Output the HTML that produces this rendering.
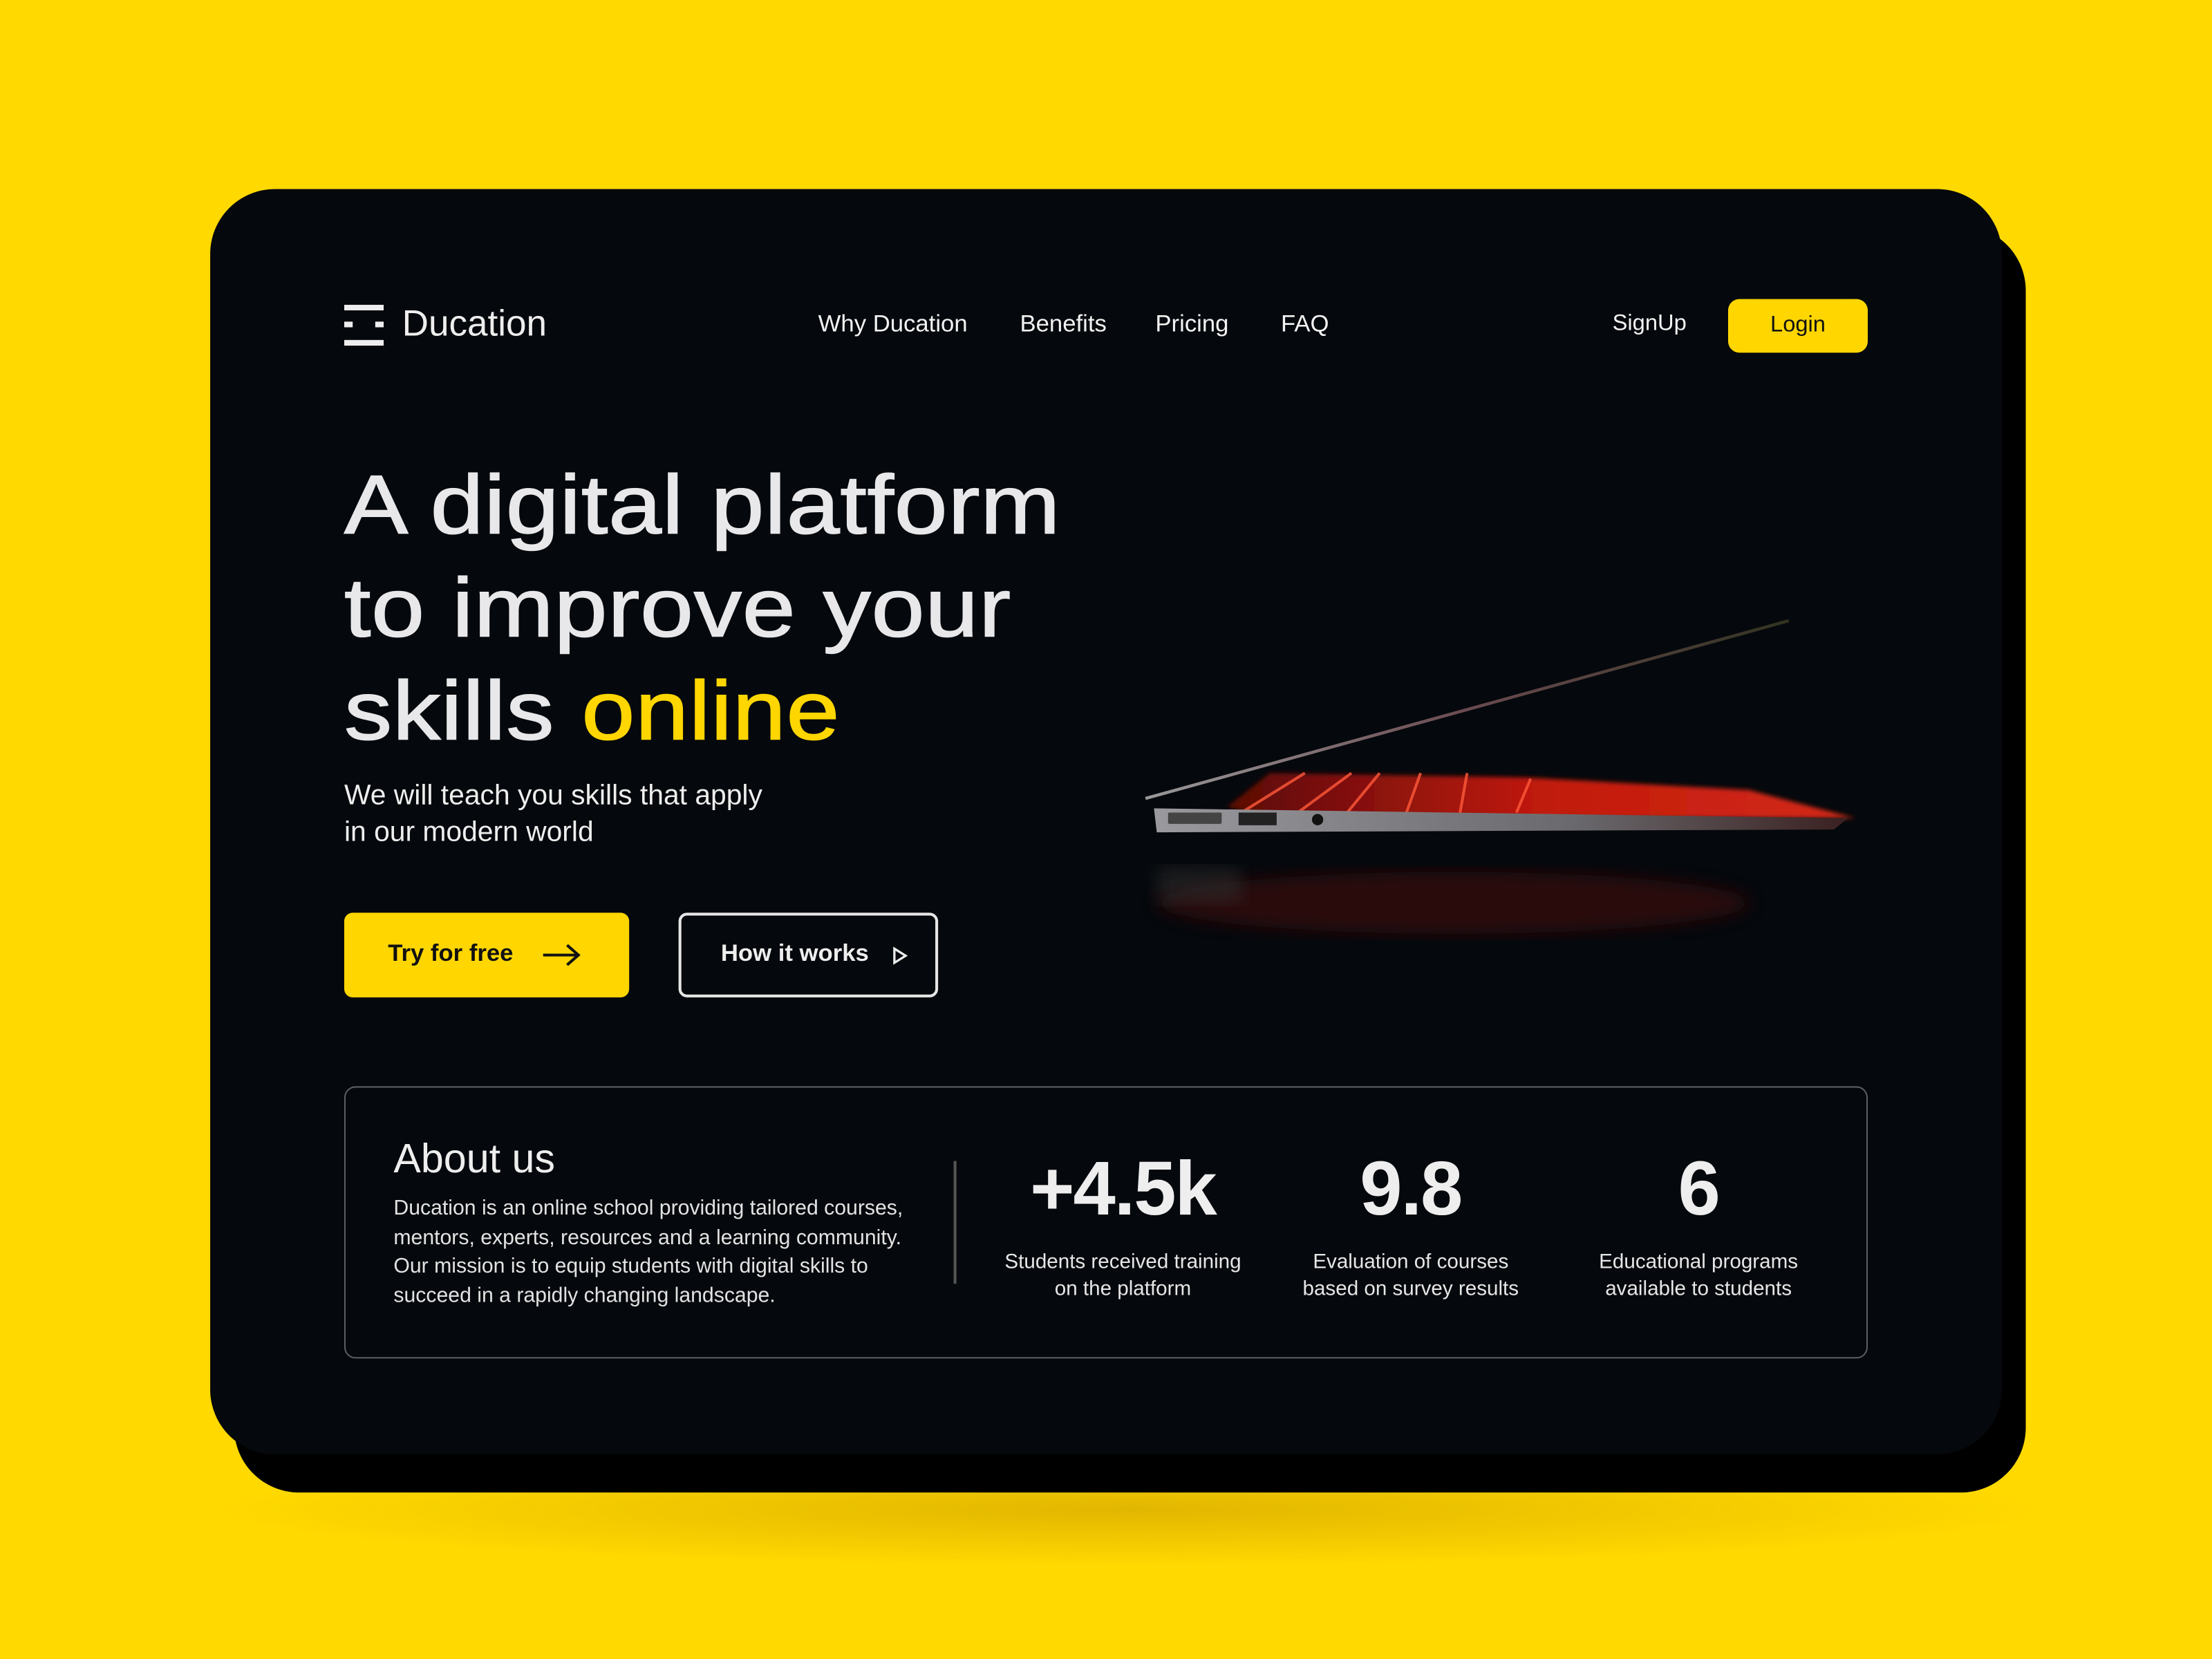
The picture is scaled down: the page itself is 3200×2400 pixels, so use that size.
<!DOCTYPE html>
<html><head><meta charset="utf-8"><style>
html,body{margin:0;padding:0}
body{width:3200px;height:2400px;background:#FFD900;overflow:hidden;position:relative;font-family:"Liberation Sans",sans-serif}
#s{position:absolute;left:0;top:0;width:1568px;height:1176px;transform:scale(2.0408);transform-origin:0 0}
.a{position:absolute;white-space:nowrap}
.nav{font-size:17px;color:#f2f2f2;top:220px}
.lab{font-size:14.5px;color:#e6e6e6;text-align:center;line-height:19px;width:220px}
.big{font-size:54px;color:#eee;text-align:center;width:220px;font-weight:bold;top:812px;letter-spacing:-1px}
</style></head><body><div id="s">
<div class="a" style="left:150px;top:1030px;width:1300px;height:80px;background:radial-gradient(ellipse at center,rgba(190,140,0,.45),rgba(255,217,0,0) 70%)"></div>
<div class="a" style="left:166px;top:160px;width:1270px;height:898px;background:#000;border-radius:46px"></div>
<div class="a" style="left:149px;top:134px;width:1270px;height:897px;background:#05080c;border-radius:46px"></div>

<svg class="a" style="left:244px;top:216px" width="28" height="29" viewBox="0 0 28 29"><g fill="#eee"><rect x="0" y="0" width="28" height="4"/><rect x="0" y="12" width="6" height="4"/><rect x="22" y="12" width="6" height="4"/><rect x="0" y="25" width="28" height="4"/></g></svg>
<div class="a" style="left:285px;top:214px;font-size:26px;color:#eee">Ducation</div>
<div class="a nav" style="left:580px">Why Ducation</div>
<div class="a nav" style="left:723px">Benefits</div>
<div class="a nav" style="left:819px">Pricing</div>
<div class="a nav" style="left:908px">FAQ</div>
<div class="a nav" style="left:1143px;font-size:16px;top:221px">SignUp</div>
<div class="a" style="left:1225px;top:212px;width:99px;height:38px;background:#FFD600;border-radius:8px;font-size:16px;color:#111;text-align:center;line-height:38px">Login</div>

<div class="a" style="left:244px;top:322px;font-size:59px;line-height:73px;color:#e8e8ea;letter-spacing:0.3px;transform:scaleX(1.15);transform-origin:0 0;-webkit-text-stroke:0.8px #e8e8ea">A digital platform<br>to improve your<br>skills <span style="color:#FFD600;-webkit-text-stroke:0.8px #FFD600">online</span></div>
<div class="a" style="left:244px;top:551px;font-size:20px;line-height:26px;color:#eee">We will teach you skills that apply<br>in our modern world</div>

<div class="a" style="left:244px;top:647px;width:202px;height:60px;background:#FFD600;border-radius:6px"></div>
<div class="a" style="left:275px;top:666px;font-size:17px;color:#111;font-weight:bold">Try for free</div>
<svg class="a" style="left:384px;top:668px" width="28" height="18" viewBox="0 0 28 18"><path d="M1 9H26M18 2L26 9L18 16" stroke="#111" stroke-width="2" fill="none"/></svg>
<div class="a" style="left:481px;top:647px;width:180px;height:56px;border:2px solid #e6e6e6;border-radius:6px"></div>
<div class="a" style="left:511px;top:666px;font-size:17px;color:#eee;font-weight:bold">How it works</div>
<svg class="a" style="left:632px;top:671px" width="12" height="13" viewBox="0 0 12 13"><path d="M2 1.5L10 6.5L2 11.5Z" stroke="#eee" stroke-width="1.6" fill="none"/></svg>

<svg class="a" style="left:790px;top:420px" width="560" height="280" viewBox="790 420 560 280">
<defs>
<filter id="b"><feGaussianBlur stdDeviation="6"/></filter>
<filter id="b2"><feGaussianBlur stdDeviation="1.5"/></filter>
<linearGradient id="lid" x1="0" x2="1"><stop offset="0" stop-color="#999"/><stop offset=".5" stop-color="#6a4a50"/><stop offset="1" stop-color="#332"/></linearGradient>
<linearGradient id="red" x1="0" x2="1"><stop offset="0" stop-color="#5a0a06"/><stop offset=".5" stop-color="#c01a0c"/><stop offset="1" stop-color="#d42a18"/></linearGradient>
<linearGradient id="base" x1="0" x2="1"><stop offset="0" stop-color="#9a9a9e"/><stop offset=".6" stop-color="#6a6a6e"/><stop offset="1" stop-color="#3a2020"/></linearGradient>
</defs>
<path d="M812 566L1268 440" stroke="url(#lid)" stroke-width="2.2"/>
<path d="M870 572L900 548L1080 551L1240 560L1315 580L900 580Z" fill="url(#red)" filter="url(#b2)"/>
<g stroke="#ff5a3a" stroke-width="2" opacity=".8"><path d="M880 576L925 548"/><path d="M920 576L958 548"/><path d="M955 576L978 548"/><path d="M997 576L1007 548"/><path d="M1035 576L1040 548"/><path d="M1075 576L1085 552"/></g>
<path d="M818 573L1310 580L1300 588L820 590Z" fill="url(#base)"/>
<rect x="828" y="576" width="38" height="8" fill="#444" rx="1"/>
<rect x="878" y="576" width="27" height="9" fill="#222"/>
<circle cx="934" cy="581" r="4" fill="#111"/>
<ellipse cx="1030" cy="640" rx="210" ry="22" fill="#3a0c08" opacity=".7" filter="url(#b)"/>
<rect x="820" y="615" width="60" height="25" fill="#333" opacity=".5" filter="url(#b)"/>
</svg>

<div class="a" style="left:244px;top:770px;width:1078px;height:191px;border:1.5px solid #5a5e66;border-radius:8px"></div>
<div class="a" style="left:279px;top:806px;font-size:29px;color:#eee">About us</div>
<div class="a" style="left:279px;top:847px;font-size:14.8px;line-height:20.5px;color:#e2e2e2">Ducation is an online school providing tailored courses,<br>mentors, experts, resources and a learning community.<br>Our mission is to equip students with digital skills to<br>succeed in a rapidly changing landscape.</div>
<div class="a" style="left:676px;top:823px;width:1.5px;height:87px;background:#555"></div>
<div class="a big" style="left:686px">+4.5k</div>
<div class="a big" style="left:890px">9.8</div>
<div class="a big" style="left:1094px">6</div>
<div class="a lab" style="left:686px;top:886px">Students received training<br>on the platform</div>
<div class="a lab" style="left:890px;top:886px">Evaluation of courses<br>based on survey results</div>
<div class="a lab" style="left:1094px;top:886px">Educational programs<br>available to students</div>
</div></body></html>
